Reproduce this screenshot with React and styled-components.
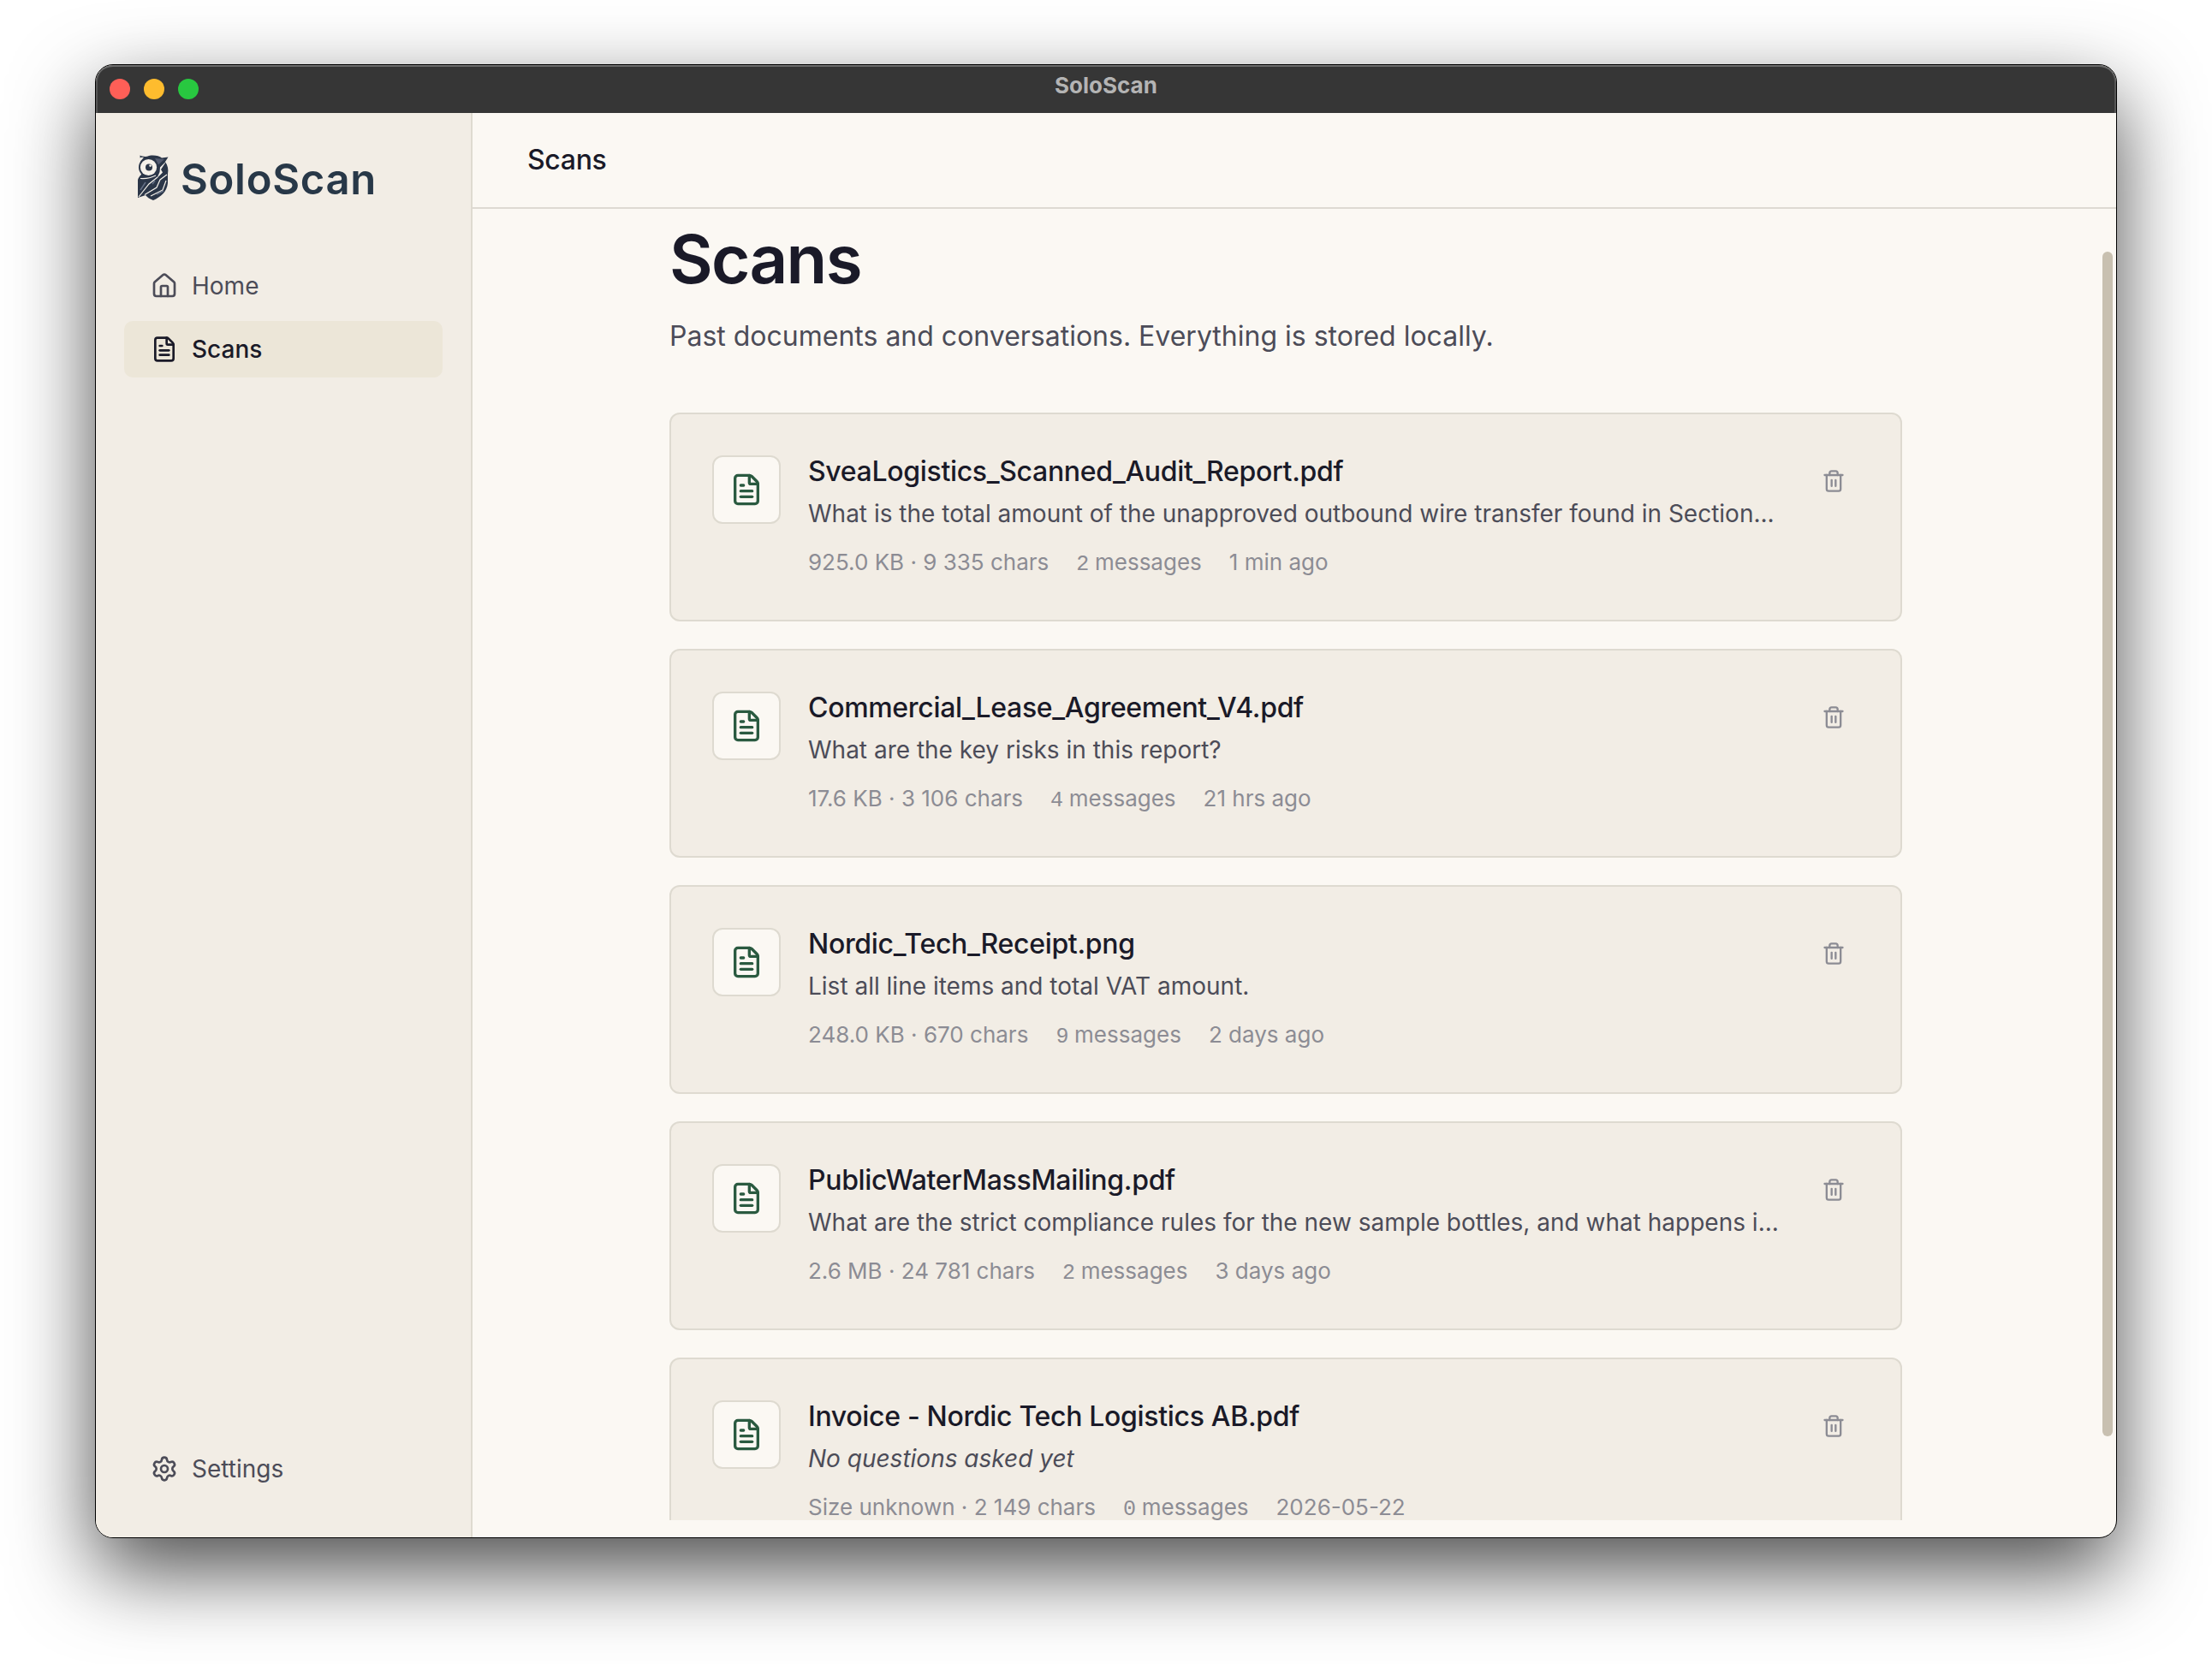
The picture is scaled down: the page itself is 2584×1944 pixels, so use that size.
import styled, { createGlobalStyle, css } from "styled-components";
import { FileText, House, Settings, Trash2 } from "lucide-react";

const GlobalStyle = createGlobalStyle`
  * {
    box-sizing: border-box;
  }

  body {
    margin: 0;
    background: #fff;
    font-family: "Inter", "Liberation Sans", sans-serif;
    color: #1a1a28;
    overflow: hidden;
  }

  h1,
  h2,
  p {
    margin: 0;
  }
`;

const Desktop = styled.div`
  width: 2584px;
  height: 1944px;
  padding: 75px 111px 147px;
  background: #fff;
  overflow: hidden;
`;

const Window = styled.div`
  height: 1722px;
  display: flex;
  flex-direction: column;
  border: 1px solid #000;
  border-radius: 21px;
  overflow: hidden;
  background: #fbf8f3;
  box-shadow: 0 38px 96px rgba(0, 0, 0, 0.7);
`;

const TitleBar = styled.header`
  height: 56px;
  flex: none;
  display: grid;
  grid-template-columns: 1fr auto 1fr;
  align-items: center;
  padding: 0 16px;
  background: #363636;
  border-radius: 20px 20px 0 0;
  box-shadow: inset 0 2px 0 #6c6c6c, inset 2px 0 0 #565656,
    inset -2px 0 0 #565656;
`;

const Lights = styled.div`
  display: flex;
  gap: 16px;
`;

const Light = styled.span`
  width: 24px;
  height: 24px;
  border-radius: 50%;
  background: ${({ $color }) => $color};
`;

const WindowTitle = styled.span`
  font-size: 26px;
  line-height: 32px;
  font-weight: 700;
  color: #b4b4b4;
  padding-bottom: 8px;
`;

const Body = styled.div`
  flex: 1;
  min-height: 0;
  display: flex;
`;

const Sidebar = styled.aside`
  width: 440px;
  flex: none;
  display: flex;
  flex-direction: column;
  padding: 44px 33px 47px;
  background: #f2ede5;
  border-right: 2px solid #dedad0;
`;

const Brand = styled.div`
  display: flex;
  align-items: center;
  gap: 14px;
  height: 64px;
  padding-left: 16px;
  margin-bottom: 61px;
`;

const BrandName = styled.span`
  padding-top: 4px;
  font-size: 49px;
  line-height: 64px;
  font-weight: 620;
  letter-spacing: 0.7px;
  color: #283848;
`;

const Nav = styled.nav`
  flex: 1;
  display: flex;
  flex-direction: column;
  gap: 8px;
`;

const NavItem = styled.a`
  height: 66px;
  display: flex;
  align-items: center;
  gap: 16px;
  padding: 0 31px;
  border-radius: 10px;
  font-size: 28px;
  color: #4c4c58;

  ${({ $active }) =>
    $active &&
    css`
      background: #ece6d8;
      color: #1a1a28;
      font-weight: 500;
    `}
`;

const Main = styled.main`
  flex: 1;
  min-width: 0;
  display: flex;
  flex-direction: column;
`;

const TopBar = styled.div`
  height: 112px;
  flex: none;
  display: flex;
  align-items: center;
  padding: 0 0 2px 64px;
  border-bottom: 2px solid #dedad3;
  font-size: 32px;
  font-weight: 500;
  letter-spacing: -0.01em;
`;

const ScrollArea = styled.div`
  flex: 1;
  min-height: 0;
  display: flex;
  margin-bottom: 20px;
`;

const Content = styled.div`
  flex: 1;
  overflow: hidden;
  padding: 13px 230px 0;
`;

const Track = styled.div`
  width: 20px;
  flex: none;
  padding: 50px 4px 0;
`;

const Thumb = styled.div`
  height: 1384px;
  border-radius: 6px;
  background: #c8c0b0;
`;

const Heading = styled.h1`
  font-size: 78px;
  line-height: 91px;
  font-weight: 610;
  letter-spacing: -1.7px;
`;

const Lead = styled.p`
  margin: 18px 0 62px;
  font-size: 32px;
  line-height: 54px;
  color: #4c4c58;
`;

const List = styled.div`
  display: flex;
  flex-direction: column;
  gap: 32px;
`;

const Card = styled.article`
  height: 244px;
  flex: none;
  display: flex;
  align-items: flex-start;
  padding: 48px;
  background: #f2ede5;
  border: 2px solid #dedad0;
  border-radius: 12px;
`;

const FileTile = styled.div`
  width: 80px;
  height: 80px;
  flex: none;
  display: flex;
  align-items: center;
  justify-content: center;
  margin-right: 32px;
  background: #fbf8f3;
  border: 2px solid #dedad0;
  border-radius: 12px;
  color: #2a5a40;
`;

const Details = styled.div`
  flex: 1;
  min-width: 0;
`;

const FileName = styled.h2`
  font-size: 32px;
  line-height: 38px;
  font-weight: 500;
  letter-spacing: -0.01em;
`;

const Question = styled.p`
  margin-top: 7px;
  font-size: 28px;
  line-height: 46px;
  color: #4c4c58;
  font-style: ${({ $empty }) => ($empty ? "italic" : "normal")};
  white-space: nowrap;
  overflow: hidden;
  text-overflow: ellipsis;
`;

const Meta = styled.div`
  display: flex;
  gap: 32px;
  margin-top: 13px;
  font-size: 26px;
  line-height: 42px;
  color: #8c8c94;
  white-space: pre;
`;

const Count = styled.span`
  font-family: "Liberation Mono", monospace;
  font-size: 25px;
  line-height: 1;
  letter-spacing: -0.6px;
`;

const DeleteButton = styled.button`
  width: 60px;
  height: 60px;
  flex: none;
  display: flex;
  align-items: center;
  justify-content: center;
  margin-left: 26px;
  padding: 0;
  border: 0;
  background: none;
  color: #8c8c94;
`;

const scans = [
  {
    name: "SveaLogistics_Scanned_Audit_Report.pdf",
    question:
      "What is the total amount of the unapproved outbound wire transfer found in Section...",
    size: "925.0 KB · 9 335 chars",
    messages: 2,
    when: "1 min ago",
  },
  {
    name: "Commercial_Lease_Agreement_V4.pdf",
    question: "What are the key risks in this report?",
    size: "17.6 KB · 3 106 chars",
    messages: 4,
    when: "21 hrs ago",
  },
  {
    name: "Nordic_Tech_Receipt.png",
    question: "List all line items and total VAT amount.",
    size: "248.0 KB · 670 chars",
    messages: 9,
    when: "2 days ago",
  },
  {
    name: "PublicWaterMassMailing.pdf",
    question:
      "What are the strict compliance rules for the new sample bottles, and what happens i...",
    size: "2.6 MB · 24 781 chars",
    messages: 2,
    when: "3 days ago",
  },
  {
    name: "Invoice - Nordic Tech Logistics AB.pdf",
    question: "",
    size: "Size unknown · 2 149 chars",
    messages: 0,
    when: "2026-05-22",
  },
];

function Owl() {
  return (
    <svg width="36" height="54" viewBox="0 0 36 54" fill="none">
      <path d="M2.500 0.500C6 2.200 10 2.500 13 1C19 0 25 1 28 3.500L35.500 2.500L32 8C35 12 36 17 35 22V33C34 43 27 49 18 53C14 51.500 11 49.500 9 47L0 50V29C1 26 2 25 4 23Z" fill="#2b3648" />
      <path d="M1 4.500C3 2.800 5 2.600 7 2.800L2 9Z" fill="#f2ede5" />
      <path d="M20 4L31 5L24 11.500Z" fill="#535b70" />
      <circle cx="12.500" cy="14.500" r="11.500" fill="#2b3648" />
      <circle cx="12.500" cy="14.500" r="9.600" fill="#f5f1ea" />
      <circle cx="13" cy="14.500" r="4" fill="#2b3648" />
      <circle cx="14.600" cy="12.600" r="1.300" fill="#f5f1ea" />
      <path d="M33.500 7L26 14.500L25.500 20L22.500 27L29 20.500L27 17Z" fill="#f5f1ea" />
      <path d="M1 49L13 34L23 26M3 27.500C9 28 15 27 21 24M8 46.500L22 38L26 29L34 23M15 48L29 41L33 30" stroke="#f5f1ea" strokeWidth="1.200" />
      <path d="M3 41L9 32M17 34L20 30M22 46L30 42" stroke="#657086" strokeWidth="1.500" />
    </svg>
  );
}

function ScanCard({ scan }) {
  return (
    <Card>
      <FileTile>
        <FileText size={40} strokeWidth={2} />
      </FileTile>
      <Details>
        <FileName>{scan.name}</FileName>
        <Question $empty={!scan.question}>
          {scan.question || "No questions asked yet"}
        </Question>
        <Meta>
          <span>{scan.size}</span>
          <span>
            <Count>{scan.messages}</Count> messages
          </span>
          <span>{scan.when}</span>
        </Meta>
      </Details>
      <DeleteButton aria-label="Delete scan">
        <Trash2 size={28} strokeWidth={2} />
      </DeleteButton>
    </Card>
  );
}

function App() {
  return (
    <Desktop>
      <GlobalStyle />
      <Window>
        <TitleBar>
          <Lights>
            <Light $color="#ff5f57" />
            <Light $color="#febc2e" />
            <Light $color="#28c840" />
          </Lights>
          <WindowTitle>SoloScan</WindowTitle>
        </TitleBar>
        <Body>
          <Sidebar>
            <Brand>
              <Owl />
              <BrandName>SoloScan</BrandName>
            </Brand>
            <Nav>
              <NavItem>
                <House size={32} strokeWidth={2} />
                Home
              </NavItem>
              <NavItem $active>
                <FileText size={32} strokeWidth={2} />
                Scans
              </NavItem>
            </Nav>
            <NavItem>
              <Settings size={32} strokeWidth={2} />
              Settings
            </NavItem>
          </Sidebar>
          <Main>
            <TopBar>Scans</TopBar>
            <ScrollArea>
              <Content>
                <Heading>Scans</Heading>
                <Lead>
                  Past documents and conversations. Everything is stored
                  locally.
                </Lead>
                <List>
                  {scans.map((scan) => (
                    <ScanCard key={scan.name} scan={scan} />
                  ))}
                </List>
              </Content>
              <Track>
                <Thumb />
              </Track>
            </ScrollArea>
          </Main>
        </Body>
      </Window>
    </Desktop>
  );
}

export default App;
